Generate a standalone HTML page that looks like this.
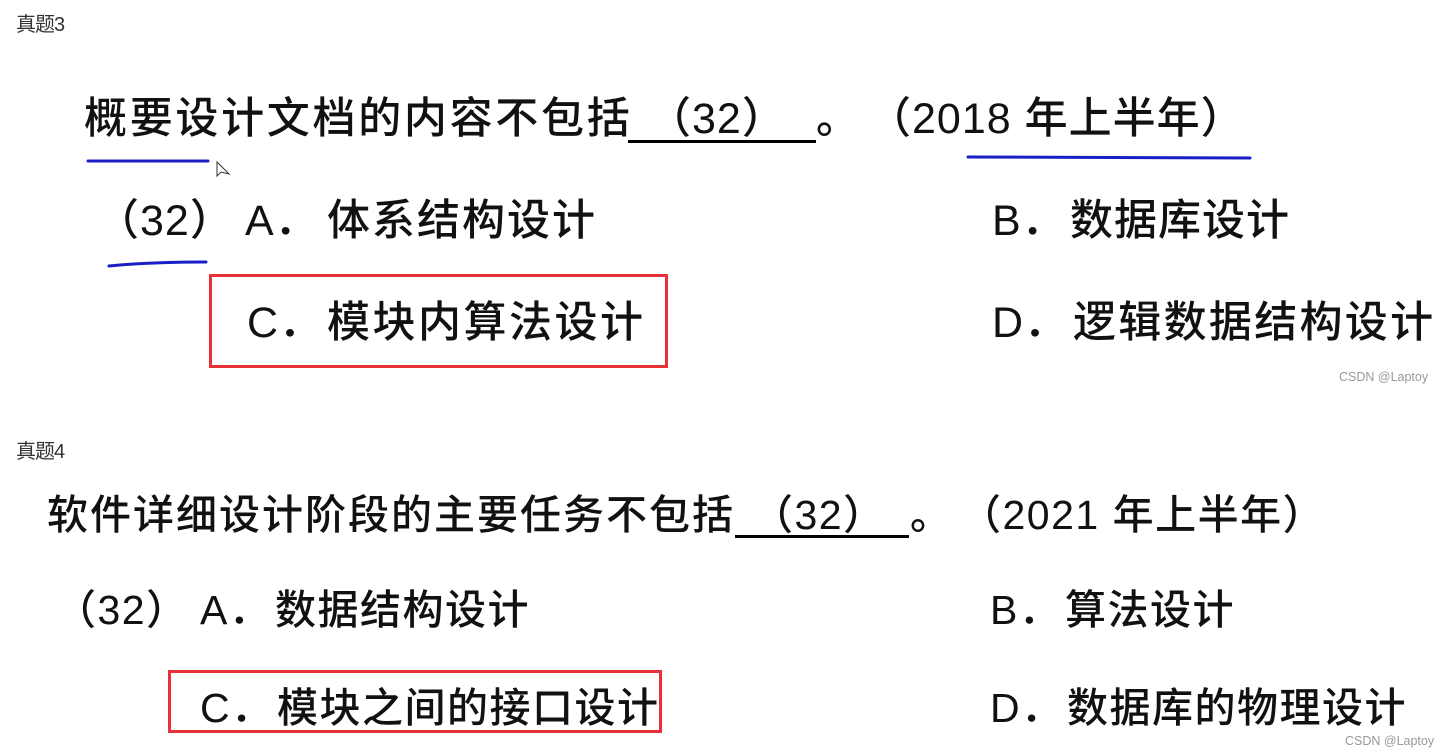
<!DOCTYPE html>
<html><head><meta charset="utf-8"><style>
body{margin:0;width:1446px;height:748px;background:#fff;position:relative;overflow:hidden;font-family:"Liberation Sans","Noto Sans CJK SC",sans-serif;color:#111}
.t{position:absolute;white-space:nowrap;line-height:1;font-weight:500}
.h{font-size:20px;color:#333;font-weight:400;letter-spacing:-1px}
.a{font-size:43px;letter-spacing:1px}
.b{font-size:41px;letter-spacing:1.5px}
.u{position:absolute;height:3px;background:#000}
.box{position:absolute;border:3px solid #e8323a;box-sizing:border-box}
.wm{position:absolute;font-size:12.5px;color:#999;white-space:nowrap}
</style></head><body>
<div class="t h" style="left:16px;top:15px">真题3</div>
<div class="t a" style="left:84px;top:98px;letter-spacing:2.7px">概要设计文档的内容不包括</div>
<div class="u" style="left:628px;top:140px;width:188px"></div>
<div class="t a" style="left:648px;top:98px">（32）</div>
<div class="t a" style="left:816px;top:98px">。</div>
<div class="t a" style="left:868px;top:98px">（2018 年上半年）</div>
<svg style="position:absolute;left:0;top:0" width="1446" height="300"><g fill="none" stroke="#1a1fc8" stroke-width="3" stroke-linecap="round"><path d="M88 161 L208 161"/><path d="M968 157 Q1100 158 1250 158"/><path d="M109 266 Q150 262 206 262"/></g><path d="M217 162 L217 176 L221 172 L229 174 Z" fill="#fff" stroke="#333" stroke-width="1"/></svg>
<div class="t a" style="left:96px;top:200px">（32）</div>
<div class="t a" style="left:245px;top:200px">A．</div>
<div class="t a" style="left:327px;top:200px;letter-spacing:2px">体系结构设计</div>
<div class="t a" style="left:992px;top:200px">B．</div>
<div class="t a" style="left:1070px;top:200px">数据库设计</div>
<div class="box" style="left:209px;top:274px;width:459px;height:94px"></div>
<div class="t a" style="left:247px;top:302px">C．</div>
<div class="t a" style="left:327px;top:302px;letter-spacing:2.5px">模块内算法设计</div>
<div class="t a" style="left:992px;top:302px">D．</div>
<div class="t a" style="left:1073px;top:302px;letter-spacing:2.3px">逻辑数据结构设计</div>
<div class="wm" style="left:1339px;top:370px">CSDN @Laptoy</div>

<div class="t h" style="left:16px;top:442px">真题4</div>
<div class="t b" style="left:47px;top:495px;letter-spacing:2px">软件详细设计阶段的主要任务不包括</div>
<div class="u" style="left:735px;top:535px;width:174px"></div>
<div class="t b" style="left:752px;top:495px">（32）</div>
<div class="t b" style="left:910px;top:495px">。</div>
<div class="t b" style="left:960px;top:495px">（2021 年上半年）</div>
<div class="t b" style="left:55px;top:590px">（32）</div>
<div class="t b" style="left:200px;top:590px">A．</div>
<div class="t b" style="left:275px;top:590px">数据结构设计</div>
<div class="t b" style="left:990px;top:590px">B．</div>
<div class="t b" style="left:1065px;top:590px">算法设计</div>
<div class="box" style="left:168px;top:670px;width:494px;height:63px"></div>
<div class="t b" style="left:200px;top:688px">C．</div>
<div class="t b" style="left:277px;top:688px;letter-spacing:1.5px">模块之间的接口设计</div>
<div class="t b" style="left:990px;top:688px">D．</div>
<div class="t b" style="left:1067px;top:688px;letter-spacing:1.5px">数据库的物理设计</div>
<div class="wm" style="left:1345px;top:734px">CSDN @Laptoy</div>
</body></html>
